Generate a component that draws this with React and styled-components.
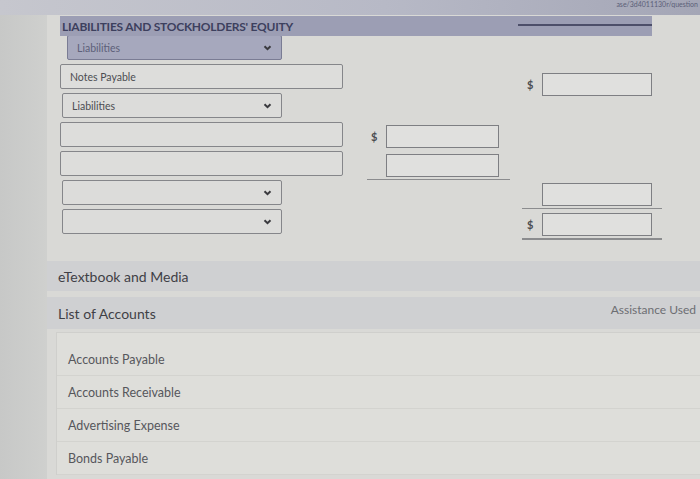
import React from 'react'
import styled, { createGlobalStyle, css } from 'styled-components'

const GlobalStyle = createGlobalStyle`
  html, body { margin: 0; padding: 0; }
  body {
    width: 700px;
    height: 479px;
    overflow: hidden;
    background: #d9d9d6;
    font-family: Lato, 'Open Sans', sans-serif;
  }
`

const Page = styled.div`
  display: flex;
  flex-direction: column;
  height: 479px;
  overflow: hidden;
`

const TopStrip = styled.div`
  height: 15px;
  flex: none;
  background: linear-gradient(90deg, #c6c7ce 0%, #b7b9c6 55%, #a4a6b6 100%);
  display: flex;
  justify-content: flex-end;
  align-items: flex-start;
  overflow: hidden;
`

const UrlText = styled.span`
  font-size: 7px;
  line-height: 8px;
  color: #5c5f78;
  margin-right: 2px;
  white-space: nowrap;
`

const Body = styled.div`
  flex: 1;
  display: flex;
`

const Gutter = styled.div`
  width: 47px;
  flex: none;
  background: linear-gradient(90deg, #c7c8c7, #cfd0ce);
`

const Content = styled.div`
  flex: 1;
  display: flex;
  flex-direction: column;
`

const Header = styled.div`
  position: relative;
  margin: 1px 48px 0 13px;
  height: 20px;
  background: #9c9eb4;
  display: flex;
  align-items: center;
  padding-left: 2px;
  font-size: 12px;
  font-weight: 700;
  letter-spacing: -0.25px;
  color: #3d405e;
  &::after {
    content: '';
    position: absolute;
    right: 0;
    top: 8px;
    width: 134px;
    height: 2px;
    background: #4d4f6a;
  }
`

const FormGrid = styled.div`
  display: grid;
  grid-template-columns: 307px 155px 140px;
  grid-auto-rows: 25px;
  row-gap: 4px;
  padding-left: 13px;
  margin-top: -1px;
`

const fieldBase = css`
  box-sizing: border-box;
  height: 25px;
  border: 1px solid #85868a;
  border-radius: 2px;
  display: flex;
  align-items: center;
  padding: 0 9px;
  font-size: 10.5px;
  color: #4c4d52;
`

const Select = styled.div`
  ${fieldBase}
  width: ${p => (p.$active ? '215px' : '220px')};
  justify-content: space-between;
  background: ${p => (p.$active ? '#a6a8bd' : '#dcdcda')};
  color: ${p => (p.$active ? '#5d6079' : '#4c4d52')};
  border-color: ${p => (p.$active ? '#7a7c94' : '#85868a')};
  margin-left: ${p => (p.$active ? '7px' : '2px')};
`

const Input = styled.div`
  ${fieldBase}
  width: 283px;
  background: #dddddb;
`

const Chevron = () => (
  <svg width="9" height="6" viewBox="0 0 9 6">
    <path d="M1.5 1.2 L4.5 4.2 L7.5 1.2" fill="none" stroke="#3a3a3e" strokeWidth="2" />
  </svg>
)

const AmountCell = styled.div`
  box-sizing: border-box;
  display: flex;
  align-items: center;
  width: ${p => p.$w}px;
  height: ${p => (p.$line ? '29px' : '25px')};
  margin-top: ${p => p.$shift || 0}px;
  padding-left: ${p => p.$pad}px;
  border-bottom: ${p => (p.$line ? `${p.$line}px solid #8b8c8e` : 'none')};
  align-self: start;
`

const Dollar = styled.span`
  width: 15px;
  flex: none;
  font-size: 11px;
  font-weight: 700;
  color: #4a4b50;
`

const Box = styled.div`
  box-sizing: border-box;
  flex: none;
  width: ${p => p.$w}px;
  height: 23px;
  border: 1px solid #7e7f83;
  background: #e0e0de;
`

const Empty = styled.div``

const Band = styled.div`
  display: flex;
  align-items: center;
  justify-content: space-between;
  height: ${p => p.$h}px;
  margin-top: ${p => p.$mt}px;
  padding: 0 4px 0 11px;
  background: #cfd0d2;
  font-size: 14px;
  color: #3f4046;
`

const Assist = styled.span`
  font-size: 12px;
  color: #6d6e72;
  margin-top: -8px;
`

const AccountList = styled.ul`
  list-style: none;
  margin: 3px 0 0 9px;
  padding: 10px 0 0 0;
  border-left: 1px solid #cfcfcc;
  border-top: 1px solid #cfcfcc;
  background: #dededa;
`

const AccountItem = styled.li`
  height: 33px;
  display: flex;
  align-items: center;
  padding-left: 11px;
  font-size: 12.5px;
  color: #56575c;
  border-bottom: 1px solid #d3d3cf;
  box-sizing: border-box;
`

function Amount({ dollar, line, shift, col }) {
  const mid = col === 2
  return (
    <AmountCell $line={line} $shift={shift} $w={mid ? 143 : 140} $pad={mid ? 4 : 5}>
      <Dollar>{dollar ? '$' : ''}</Dollar>
      <Box $w={mid ? 113 : 110} />
    </AmountCell>
  )
}

const accounts = ['Accounts Payable', 'Accounts Receivable', 'Advertising Expense', 'Bonds Payable']

export default function App() {
  return (
    <Page>
      <GlobalStyle />
      <TopStrip>
        <UrlText>ase/3d4011130r/question</UrlText>
      </TopStrip>
      <Body>
        <Gutter />
        <Content>
          <Header>LIABILITIES AND STOCKHOLDERS' EQUITY</Header>
          <FormGrid>
            <Select $active>Liabilities<Chevron /></Select>
            <Empty />
            <Empty />

            <Input>Notes Payable</Input>
            <Empty />
            <Amount dollar col={3} shift={8} />

            <Select>Liabilities<Chevron /></Select>
            <Empty />
            <Empty />

            <Input />
            <Amount dollar col={2} shift={2} />
            <Empty />

            <Input />
            <Amount line={1} col={2} shift={0} />
            <Empty />

            <Select><span /><Chevron /></Select>
            <Empty />
            <Amount line={1} col={3} shift={0} />

            <Select><span /><Chevron /></Select>
            <Empty />
            <Amount dollar line={2} col={3} shift={2} />
          </FormGrid>
          <Band $h={30} $mt={27}>eTextbook and Media</Band>
          <Band $h={32} $mt={6}>
            List of Accounts
            <Assist>Assistance Used</Assist>
          </Band>
          <AccountList>
            {accounts.map(a => (
              <AccountItem key={a}>{a}</AccountItem>
            ))}
          </AccountList>
        </Content>
      </Body>
    </Page>
  )
}
